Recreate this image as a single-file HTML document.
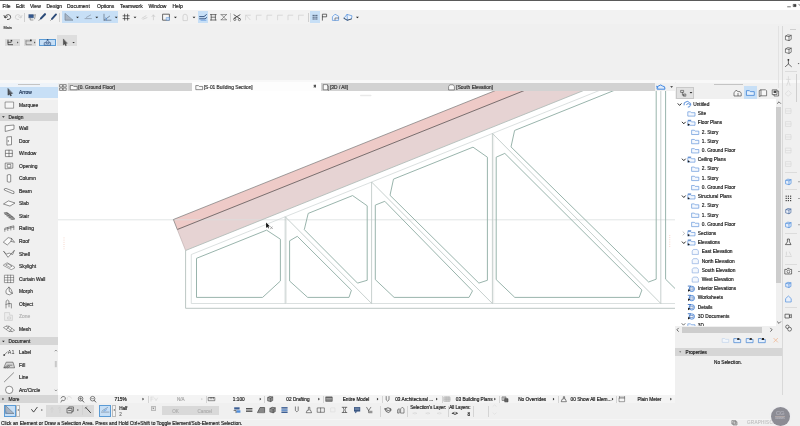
<!DOCTYPE html>
<html><head><meta charset="utf-8"><title>Archicad</title>
<style>
html,body{margin:0;padding:0}
body{width:800px;height:426px;overflow:hidden;background:#f0f0f0;font-family:"Liberation Sans",sans-serif;position:relative}
.t{position:absolute;white-space:nowrap;-webkit-text-stroke:0.18px currentColor;will-change:opacity;opacity:.999}
.r{position:absolute}
svg{position:absolute;left:0;top:0;overflow:visible}
</style></head><body>

<div class="r" style="left:0.00px;top:0.00px;width:800.00px;height:1.20px;background:#5a5a5a;"></div>
<div class="r" style="left:0.00px;top:1.20px;width:800.00px;height:8.60px;background:#ffffff;"></div>
<div class="t" style="left:2.50px;top:2.70px;font-size:5px;line-height:6px;color:#222;">File</div>
<div class="t" style="left:16.00px;top:2.70px;font-size:5px;line-height:6px;color:#222;">Edit</div>
<div class="t" style="left:30.00px;top:2.70px;font-size:5px;line-height:6px;color:#222;">View</div>
<div class="t" style="left:46.50px;top:2.70px;font-size:5px;line-height:6px;color:#222;">Design</div>
<div class="t" style="left:67.00px;top:2.70px;font-size:5px;line-height:6px;color:#222;">Document</div>
<div class="t" style="left:97.00px;top:2.70px;font-size:5px;line-height:6px;color:#222;">Options</div>
<div class="t" style="left:120.00px;top:2.70px;font-size:5px;line-height:6px;color:#222;">Teamwork</div>
<div class="t" style="left:148.50px;top:2.70px;font-size:5px;line-height:6px;color:#222;">Window</div>
<div class="t" style="left:172.50px;top:2.70px;font-size:5px;line-height:6px;color:#222;">Help</div>
<div class="r" style="left:58px;top:91px;width:617px;height:304px;background:#fff;overflow:hidden"><svg width="617" height="304" viewBox="58 91 617 304" style="left:0;top:0">
<polygon points="173.4,219.5 700,8.59669999999997 700,20.158649999999966 177.3,229.5" fill="#eecac7"/>
<polygon points="177.3,229.5 700,20.158649999999966 700,43.71119999999999 185.6,250.5" fill="#e6d3d3"/>
<line x1="58" y1="219.8" x2="675" y2="219.8" stroke="#d9dede" stroke-width="0.8"/>
<polyline points="177.3,229.5 173.4,219.5 700,8.59669999999997" fill="none" stroke="#777" stroke-width="0.7"/>
<line x1="177.3" y1="229.5" x2="700" y2="20.158649999999966" stroke="#5a5050" stroke-width="0.8"/>
<line x1="177.3" y1="229.5" x2="185.6" y2="250.5" stroke="#b9aaaa" stroke-width="0.6"/>
<polyline points="700,43.71119999999999 185.6,250.5 185.6,308.3 675,308.3" fill="none" stroke="#a9b8b4" stroke-width="0.8"/>
<polyline points="700,50.01119999999999 191.3,254.5086 191.3,303.5 675,303.5" fill="none" stroke="#ccd3d3" stroke-width="0.7"/>
<line x1="285.2" y1="216.76080000000002" x2="285.2" y2="303.5" stroke="#b9c4c1" stroke-width="0.8"/>
<line x1="286.5" y1="216.2382" x2="286.5" y2="303.5" stroke="#dde2e1" stroke-width="0.6"/>
<line x1="371.6" y1="182.028" x2="371.6" y2="303.5" stroke="#b9c4c1" stroke-width="0.8"/>
<line x1="492.4" y1="133.46640000000002" x2="492.4" y2="303.5" stroke="#b9c4c1" stroke-width="0.8"/>
<line x1="493.7" y1="132.94379999999998" x2="493.7" y2="303.5" stroke="#dde2e1" stroke-width="0.6"/>
<line x1="660.8" y1="65.76960000000001" x2="660.8" y2="303.5" stroke="#b9c4c1" stroke-width="0.8"/>
<polygon points="196.50,258.32 266.60,230.14 280.40,239.20 280.40,281.00 262.60,297.40 196.50,297.40" fill="none" stroke="#94b0a8" stroke-width="0.95" stroke-linejoin="round"/>
<line x1="285.2" y1="216.76080000000002" x2="371.6" y2="303.5" stroke="#b9c4c1" stroke-width="0.8"/>
<polygon points="289.60,240.80 297.30,236.30 351.40,290.20 349.00,297.40 307.70,297.40 289.60,281.00" fill="none" stroke="#94b0a8" stroke-width="0.95" stroke-linejoin="round"/>
<polygon points="308.20,213.41 352.60,195.57 367.20,205.80 367.20,280.30 357.50,283.10 304.30,229.60" fill="none" stroke="#94b0a8" stroke-width="0.95" stroke-linejoin="round"/>
<line x1="371.6" y1="182.028" x2="492.4" y2="303.5" stroke="#b9c4c1" stroke-width="0.8"/>
<polygon points="375.30,205.10 384.80,201.30 472.50,290.90 469.00,297.40 394.10,297.40 375.30,279.60" fill="none" stroke="#94b0a8" stroke-width="0.95" stroke-linejoin="round"/>
<polygon points="393.50,179.12 473.00,147.17 487.40,157.20 487.40,280.30 478.90,283.10 390.00,195.30" fill="none" stroke="#94b0a8" stroke-width="0.95" stroke-linejoin="round"/>
<line x1="492.4" y1="133.46640000000002" x2="660.8" y2="303.5" stroke="#b9c4c1" stroke-width="0.8"/>
<polygon points="496.20,157.20 504.80,153.40 641.90,290.00 639.20,297.40 514.80,297.40 496.20,279.60" fill="none" stroke="#94b0a8" stroke-width="0.95" stroke-linejoin="round"/>
<polygon points="514.60,130.44 650.00,76.01 656.20,70.00 656.20,279.20 648.60,282.00 511.00,146.90" fill="none" stroke="#94b0a8" stroke-width="0.95" stroke-linejoin="round"/>
<line x1="660.8" y1="65.76960000000001" x2="960.8" y2="365.7696" stroke="#b9c4c1" stroke-width="0.8"/>
<polygon points="665.60,80.00 665.60,279.20 684.00,297.40 700.00,297.40 700.00,80.00" fill="none" stroke="#94b0a8" stroke-width="0.95" stroke-linejoin="round"/>
<path d="M266.1 222.5 L266.1 227.9 L267.4 226.8 L268.2 228.4 L268.9 228 L268.2 226.5 L269.8 226.2 Z" fill="#111"/>
<path d="M270 226.2 l2.8 2.8 m-2.6 0.2 l2.2 -2.6" stroke="#8a8a8a" stroke-width="0.7" fill="none"/>
</svg></div>
<div class="r" style="left:0.00px;top:80.00px;width:800.00px;height:2.50px;background:#f8f8f8;"></div>
<div class="r" style="left:0.00px;top:82.50px;width:57.60px;height:4.00px;background:#eef3f9;"></div>
<div class="r" style="left:0.00px;top:97.80px;width:57.60px;height:2.00px;background:#f5f5f5;"></div>
<div class="r" style="left:0.00px;top:9.80px;width:800.00px;height:14.20px;background:#f2f2f2;"></div>
<div class="r" style="left:674.50px;top:82.00px;width:1.50px;height:313.00px;background:#f0f0f0;"></div>
<div class="r" style="left:655.00px;top:82.60px;width:20.00px;height:8.80px;background:#f0f0f0;"></div>
<div class="r" style="left:58.00px;top:82.60px;width:597.00px;height:8.80px;background:#d2d2d2;"></div>
<div class="r" style="left:58.00px;top:82.60px;width:10.00px;height:8.80px;background:#ececec;"></div>
<div class="r" style="left:192.00px;top:82.40px;width:128.50px;height:9.00px;background:#fdfdfd;"></div>
<div class="t" style="left:78.30px;top:85.08px;font-size:4.85px;line-height:5.85px;color:#333;">[0. Ground Floor]</div>
<div class="t" style="left:203.70px;top:85.08px;font-size:4.85px;line-height:5.85px;color:#333;">[S-01 Building Section]</div>
<div class="t" style="left:330.00px;top:85.08px;font-size:4.85px;line-height:5.85px;color:#333;">[3D / All]</div>
<div class="t" style="left:456.30px;top:85.08px;font-size:4.85px;line-height:5.85px;color:#333;">[South Elevation]</div>
<div class="t" style="left:313.60px;top:83.70px;font-size:4.6px;line-height:5.6px;color:#111;font-weight:bold">×</div>
<div class="r" style="left:0.00px;top:86.50px;width:57.60px;height:11.30px;background:#c7dff6;"></div>
<div class="r" style="left:0.00px;top:112.80px;width:57.60px;height:7.90px;background:#d6d6d6;"></div>
<div class="r" style="left:0.00px;top:337.30px;width:57.60px;height:7.90px;background:#d6d6d6;"></div>
<div class="r" style="left:0.00px;top:394.80px;width:57.60px;height:8.20px;background:#d6d6d6;"></div>
<div class="r" style="left:18.00px;top:84.00px;width:22.00px;height:0.60px;background:#c4c4c4;"></div>
<div class="t" style="left:19.00px;top:89.95px;font-size:4.9px;line-height:5.9px;color:#243a5a;">Arrow</div>
<div class="t" style="left:19.00px;top:102.75px;font-size:4.9px;line-height:5.9px;color:#2a2a2a;">Marquee</div>
<div class="t" style="left:19.00px;top:126.15px;font-size:4.9px;line-height:5.9px;color:#2a2a2a;">Wall</div>
<div class="t" style="left:19.00px;top:138.69px;font-size:4.9px;line-height:5.9px;color:#2a2a2a;">Door</div>
<div class="t" style="left:19.00px;top:151.23px;font-size:4.9px;line-height:5.9px;color:#2a2a2a;">Window</div>
<div class="t" style="left:19.00px;top:163.77px;font-size:4.9px;line-height:5.9px;color:#2a2a2a;">Opening</div>
<div class="t" style="left:19.00px;top:176.31px;font-size:4.9px;line-height:5.9px;color:#2a2a2a;">Column</div>
<div class="t" style="left:19.00px;top:188.85px;font-size:4.9px;line-height:5.9px;color:#2a2a2a;">Beam</div>
<div class="t" style="left:19.00px;top:201.39px;font-size:4.9px;line-height:5.9px;color:#2a2a2a;">Slab</div>
<div class="t" style="left:19.00px;top:213.93px;font-size:4.9px;line-height:5.9px;color:#2a2a2a;">Stair</div>
<div class="t" style="left:19.00px;top:226.47px;font-size:4.9px;line-height:5.9px;color:#2a2a2a;">Railing</div>
<div class="t" style="left:19.00px;top:239.01px;font-size:4.9px;line-height:5.9px;color:#2a2a2a;">Roof</div>
<div class="t" style="left:19.00px;top:251.55px;font-size:4.9px;line-height:5.9px;color:#2a2a2a;">Shell</div>
<div class="t" style="left:19.00px;top:264.09px;font-size:4.9px;line-height:5.9px;color:#2a2a2a;">Skylight</div>
<div class="t" style="left:19.00px;top:276.63px;font-size:4.9px;line-height:5.9px;color:#2a2a2a;">Curtain Wall</div>
<div class="t" style="left:19.00px;top:289.17px;font-size:4.9px;line-height:5.9px;color:#2a2a2a;">Morph</div>
<div class="t" style="left:19.00px;top:301.71px;font-size:4.9px;line-height:5.9px;color:#2a2a2a;">Object</div>
<div class="t" style="left:19.00px;top:314.25px;font-size:4.9px;line-height:5.9px;color:#b5b5b5;">Zone</div>
<div class="t" style="left:19.00px;top:326.79px;font-size:4.9px;line-height:5.9px;color:#2a2a2a;">Mesh</div>
<div class="t" style="left:19.00px;top:350.35px;font-size:4.9px;line-height:5.9px;color:#2a2a2a;">Label</div>
<div class="t" style="left:19.00px;top:362.75px;font-size:4.9px;line-height:5.9px;color:#2a2a2a;">Fill</div>
<div class="t" style="left:19.00px;top:375.15px;font-size:4.9px;line-height:5.9px;color:#2a2a2a;">Line</div>
<div class="t" style="left:19.00px;top:387.55px;font-size:4.9px;line-height:5.9px;color:#2a2a2a;">Arc/Circle</div>
<div class="t" style="left:8.50px;top:114.80px;font-size:4.8px;line-height:5.8px;color:#2a2a2a;">Design</div>
<div class="t" style="left:8.50px;top:339.30px;font-size:4.8px;line-height:5.8px;color:#2a2a2a;">Document</div>
<div class="t" style="left:8.50px;top:396.90px;font-size:4.8px;line-height:5.8px;color:#2a2a2a;">More</div>
<div class="r" style="left:675.00px;top:99.40px;width:100.50px;height:226.80px;background:#ffffff;"></div>
<div class="r" style="left:775.50px;top:99.40px;width:6.50px;height:226.80px;background:#f0f0f0;"></div>
<div class="r" style="left:776.30px;top:107.00px;width:5.00px;height:176.00px;background:#cdcdcd;"></div>
<div class="r" style="left:713.50px;top:84.00px;width:29.00px;height:0.60px;background:#c4c4c4;"></div>
<div class="r" style="left:676.20px;top:87.00px;width:18.00px;height:11.50px;background:#e1e1e1;box-sizing:border-box;border:0.5px solid #c8c8c8"></div>
<div class="r" style="left:744.30px;top:86.20px;width:12.50px;height:12.80px;background:#c7dff6;"></div>
<div class="t" style="left:693.20px;top:102.00px;font-size:4.8px;line-height:5.8px;color:#222;">Untitled</div>
<div class="t" style="left:697.80px;top:111.21px;font-size:4.8px;line-height:5.8px;color:#222;">Site</div>
<div class="t" style="left:697.80px;top:120.42px;font-size:4.8px;line-height:5.8px;color:#222;">Floor Plans</div>
<div class="t" style="left:701.80px;top:129.63px;font-size:4.8px;line-height:5.8px;color:#222;">2. Story</div>
<div class="t" style="left:701.80px;top:138.84px;font-size:4.8px;line-height:5.8px;color:#222;">1. Story</div>
<div class="t" style="left:701.80px;top:148.05px;font-size:4.8px;line-height:5.8px;color:#222;">0. Ground Floor</div>
<div class="t" style="left:697.80px;top:157.26px;font-size:4.8px;line-height:5.8px;color:#222;">Ceiling Plans</div>
<div class="t" style="left:701.80px;top:166.47px;font-size:4.8px;line-height:5.8px;color:#222;">2. Story</div>
<div class="t" style="left:701.80px;top:175.68px;font-size:4.8px;line-height:5.8px;color:#222;">1. Story</div>
<div class="t" style="left:701.80px;top:184.89px;font-size:4.8px;line-height:5.8px;color:#222;">0. Ground Floor</div>
<div class="t" style="left:697.80px;top:194.10px;font-size:4.8px;line-height:5.8px;color:#222;">Structural Plans</div>
<div class="t" style="left:701.80px;top:203.31px;font-size:4.8px;line-height:5.8px;color:#222;">2. Story</div>
<div class="t" style="left:701.80px;top:212.52px;font-size:4.8px;line-height:5.8px;color:#222;">1. Story</div>
<div class="t" style="left:701.80px;top:221.73px;font-size:4.8px;line-height:5.8px;color:#222;">0. Ground Floor</div>
<div class="t" style="left:697.80px;top:230.94px;font-size:4.8px;line-height:5.8px;color:#222;">Sections</div>
<div class="t" style="left:697.80px;top:240.15px;font-size:4.8px;line-height:5.8px;color:#222;">Elevations</div>
<div class="t" style="left:701.80px;top:249.36px;font-size:4.8px;line-height:5.8px;color:#222;">East Elevation</div>
<div class="t" style="left:701.80px;top:258.57px;font-size:4.8px;line-height:5.8px;color:#222;">North Elevation</div>
<div class="t" style="left:701.80px;top:267.78px;font-size:4.8px;line-height:5.8px;color:#222;">South Elevation</div>
<div class="t" style="left:701.80px;top:276.99px;font-size:4.8px;line-height:5.8px;color:#222;">West Elevation</div>
<div class="t" style="left:697.80px;top:286.20px;font-size:4.8px;line-height:5.8px;color:#222;">Interior Elevations</div>
<div class="t" style="left:697.80px;top:295.41px;font-size:4.8px;line-height:5.8px;color:#222;">Worksheets</div>
<div class="t" style="left:697.80px;top:304.62px;font-size:4.8px;line-height:5.8px;color:#222;">Details</div>
<div class="t" style="left:697.80px;top:313.83px;font-size:4.8px;line-height:5.8px;color:#222;">3D Documents</div>
<div class="r" style="left:675.00px;top:326.20px;width:107.00px;height:7.00px;background:#f0f0f0;"></div>
<div class="r" style="left:682.20px;top:327.00px;width:80.00px;height:5.80px;background:#cdcdcd;"></div>
<div class="r" style="left:675.00px;top:347.60px;width:106.50px;height:8.30px;background:#d6d6d6;"></div>
<div class="t" style="left:685.50px;top:349.85px;font-size:4.7px;line-height:5.7px;color:#222;">Properties</div>
<div class="t" style="left:678.00px;width:100px;text-align:center;top:359.65px;font-size:4.7px;line-height:5.7px;color:#222;">No Selection.</div>
<div class="r" style="left:58.00px;top:394.60px;width:617.00px;height:8.60px;background:#f4f4f4;"></div>
<div class="t" style="left:114.50px;top:396.92px;font-size:4.75px;line-height:5.75px;color:#222;">715%</div>
<div class="t" style="left:232.80px;top:396.92px;font-size:4.75px;line-height:5.75px;color:#222;">1:100</div>
<div class="t" style="left:286.30px;top:396.92px;font-size:4.75px;line-height:5.75px;color:#222;">02 Drafting</div>
<div class="t" style="left:342.70px;top:396.92px;font-size:4.75px;line-height:5.75px;color:#222;">Entire Model</div>
<div class="t" style="left:395.20px;top:396.92px;font-size:4.75px;line-height:5.75px;color:#222;">03 Architectural ...</div>
<div class="t" style="left:455.80px;top:396.92px;font-size:4.75px;line-height:5.75px;color:#222;">03 Building Plans</div>
<div class="t" style="left:518.20px;top:396.92px;font-size:4.75px;line-height:5.75px;color:#222;">No Overrides</div>
<div class="t" style="left:570.60px;top:396.92px;font-size:4.75px;line-height:5.75px;color:#222;">00 Show All Elem...</div>
<div class="t" style="left:637.40px;top:396.92px;font-size:4.75px;line-height:5.75px;color:#222;">Plain Meter</div>
<div class="t" style="left:177.00px;top:397.00px;font-size:4.6px;line-height:5.6px;color:#aaa;">N/A</div>
<div class="r" style="left:3.60px;top:405.00px;width:12.40px;height:12.20px;background:#c7dff6;box-sizing:border-box;border:0.6px solid #5b9bd5"></div>
<div class="r" style="left:16.40px;top:405.00px;width:4.00px;height:12.20px;background:#f4f4f4;box-sizing:border-box;border:0.4px solid #bbb"></div>
<div class="r" style="left:45.60px;top:405.00px;width:48.40px;height:12.20px;background:#dadada;"></div>
<div class="r" style="left:99.00px;top:405.00px;width:12.40px;height:12.20px;background:#c7dff6;box-sizing:border-box;border:0.6px solid #5b9bd5"></div>
<div class="r" style="left:112.00px;top:405.00px;width:4.40px;height:12.20px;background:#f4f4f4;box-sizing:border-box;border:0.4px solid #bbb"></div>
<div class="t" style="left:119.20px;top:405.90px;font-size:4.6px;line-height:5.6px;color:#222;">Half</div>
<div class="t" style="left:119.20px;top:412.10px;font-size:4.6px;line-height:5.6px;color:#777;">2</div>
<div class="r" style="left:150.60px;top:405.60px;width:5.00px;height:5.00px;background:#e4e4e4;box-sizing:border-box;border:0.4px solid #bbb"></div>
<div class="r" style="left:161.60px;top:406.00px;width:28.00px;height:9.20px;background:#d9d9d9;"></div>
<div class="r" style="left:190.40px;top:406.00px;width:28.60px;height:9.20px;background:#d9d9d9;"></div>
<div class="t" style="left:125.60px;width:100px;text-align:center;top:408.70px;font-size:4.6px;line-height:5.6px;color:#b0b0b0;">OK</div>
<div class="t" style="left:154.70px;width:100px;text-align:center;top:408.70px;font-size:4.6px;line-height:5.6px;color:#b0b0b0;">Cancel</div>
<div class="t" style="left:410.20px;top:405.40px;font-size:4.6px;line-height:5.6px;color:#222;">Selection's Layer:</div>
<div class="t" style="left:449.20px;top:405.40px;font-size:4.6px;line-height:5.6px;color:#222;">All Layers:</div>
<div class="t" style="left:467.40px;top:412.10px;font-size:4.6px;line-height:5.6px;color:#222;">8</div>
<div class="t" style="left:1.00px;top:420.56px;font-size:4.87px;line-height:5.87px;color:#222;">Click an Element or Draw a Selection Area. Press and Hold Ctrl+Shift to Toggle Element/Sub-Element Selection.</div>
<div class="t" style="left:747.00px;top:420.30px;font-size:4.6px;line-height:5.6px;color:#c6c6c6;letter-spacing:0.25px">GRAPHISOFT</div>
<div class="r" style="left:770.5px;top:406.5px;width:19px;height:19px;border-radius:50%;background:#8c8c94;box-shadow:0 0 1.2px 0.6px rgba(235,235,240,.9)"></div>
<div class="t" style="left:730.00px;width:100px;text-align:center;top:408.90px;font-size:6.2px;line-height:7.2px;color:#a9a9b2;font-weight:bold;letter-spacing:-0.3px">CG</div>
<div class="t" style="left:730.00px;width:100px;text-align:center;top:416.70px;font-size:2.6px;line-height:3.6px;color:#b4b4bc;">courses</div>
<div class="r" style="left:775.00px;top:416.20px;width:10.00px;height:0.40px;background:#b0a6a6;"></div>
<div class="t" style="left:3.60px;top:25.85px;font-size:3.9px;line-height:4.9px;color:#444;">Main</div>
<svg width="800" height="426" viewBox="0 0 800 426">
<path d="M8 88.9 L8 95.2 L9.5 93.9 L10.6 96 L11.4 95.6 L10.4 93.6 L12.2 93.4 Z" stroke="#222" stroke-width="0.55" fill="#5a5f68" stroke-linejoin="round" stroke-linecap="round" />
<path d="M5.5 102 H13.6 V108.2 H5.5 Z" stroke="#555" stroke-width="0.55" fill="#f6f6f6" stroke-linejoin="round" stroke-linecap="round" />
<path d="M2.05 116.325 L4.75 116.325 L3.4 117.81 Z" fill="#222"/>
<path d="M2.05 340.825 L4.75 340.825 L3.4 342.31 Z" fill="#222"/>
<path d="M2.5250000000000004 397.65 L4.01 399.0 L2.5250000000000004 400.35 Z" fill="#222"/>
<path d="M5.6 125.80000000000001 L14 125.0 L14 129.20000000000002 L5.6 131.4 Z" stroke="#484848" stroke-width="0.6" fill="#fafafa" stroke-linejoin="round" stroke-linecap="round" />
<path d="M7.3 136.9 L11.5 136.6 L11.5 144.70000000000002 L7.3 145.1 Z M8.3 140.4 V141.70000000000002" stroke="#484848" stroke-width="0.6" fill="#fafafa" stroke-linejoin="round" stroke-linecap="round" />
<path d="M5.8 150.20000000000002 H12.3 V156.6 H5.8 Z M9 150.20000000000002 V156.6 M5.8 153.4 H12.3" stroke="#484848" stroke-width="0.6" fill="#fafafa" stroke-linejoin="round" stroke-linecap="round" />
<path d="M5.6 163.1 H12.8 V168.1 L5.6 168.9 Z M7.6 164.4 H10.8 V167.3 H7.6 Z" stroke="#484848" stroke-width="0.6" fill="#fafafa" stroke-linejoin="round" stroke-linecap="round" />
<path d="M7.6 174.9 Q9.1 174.1 10.7 174.9 V181.8 Q9.1 182.7 7.6 181.8 Z" stroke="#484848" stroke-width="0.6" fill="#fafafa" stroke-linejoin="round" stroke-linecap="round" />
<path d="M4.7 188.8 L6 188.4 L14 191.6 L14 193.4 L12.8 193.6 L4.7 190.2 Z" stroke="#484848" stroke-width="0.6" fill="#fafafa" stroke-linejoin="round" stroke-linecap="round" />
<path d="M3.8 203.8 L8.4 200.9 L15 203.0 L10.3 205.9 Z" stroke="#484848" stroke-width="0.6" fill="#fafafa" stroke-linejoin="round" stroke-linecap="round" />
<path d="M4.3 212.8 L7 212.4 L14.4 218 L14.4 219.4 L11.4 219.4 Z M5.6 213.4 L12.6 219 M6.8 212.8 L13.6 218.4 M5 214.5 L8 213.5 M7 216 L10 215 M9 217.6 L12 216.6" stroke="#484848" stroke-width="0.5" fill="#bbb" stroke-linejoin="round" stroke-linecap="round" />
<path d="M4.8 231.4 V228.2 L13.8 225.79999999999998 V229.6 M4.8 229.4 L13.8 227.1 M7.8 227.4 V230.6 M10.8 226.6 V230.0" stroke="#484848" stroke-width="0.55" fill="none" stroke-linejoin="round" stroke-linecap="round" />
<path d="M3.6 241.9 L8.2 237.6 L11.6 238.5 L14.6 242.29999999999998 L11 241.29999999999998 L7.6 244.7 Z M11.6 238.5 L11 241.29999999999998" stroke="#484848" stroke-width="0.6" fill="#fafafa" stroke-linejoin="round" stroke-linecap="round" />
<path d="M3.8 251.5 L8 257.3 L14.4 250.29999999999998 L12.6 254.5 Q9 251.89999999999998 6.6 253.89999999999998 Z" stroke="#484848" stroke-width="0.6" fill="#fafafa" stroke-linejoin="round" stroke-linecap="round" />
<path d="M4 264.59999999999997 L7.2 262.8 L14.4 266.8 L14.4 268.2 L11.2 269.59999999999997 L4 265.8 Z M6 264.8 L8 263.8 L12 266.2 L10.2 267.2 Z" stroke="#484848" stroke-width="0.5" fill="#fafafa" stroke-linejoin="round" stroke-linecap="round" />
<path d="M4.8 275.2 H13.6 V282.6 H4.8 Z M7.7 275.2 V282.6 M10.6 275.2 V282.6 M4.8 277.6 H13.6 M4.8 280.1 H13.6" stroke="#484848" stroke-width="0.5" fill="#fafafa" stroke-linejoin="round" stroke-linecap="round" />
<path d="M8.8 287.3 Q4.6 290.3 6.4 293.7 Q9.4 296.1 12.4 293.3 L9.6 291.7 Z M8.8 287.3 Q11.6 288.3 12.4 293.3" stroke="#484848" stroke-width="0.6" fill="#fafafa" stroke-linejoin="round" stroke-linecap="round" />
<path d="M6 308.0 V303.40000000000003 Q5.6 300.0 7.6 300.0 Q9.4 300.0 9 303.6 H11.4 V308.0 M9 303.6 V306.8 M6 304.40000000000003 L9 303.6" stroke="#484848" stroke-width="0.55" fill="none" stroke-linejoin="round" stroke-linecap="round" />
<path d="M5 312.59999999999997 H9.6 V315.2 H12.4 V320.4 H5 Z M8 317.0 H10.6 V319.0 H8 Z" stroke="#c4c4c4" stroke-width="0.6" fill="#ececec" stroke-linejoin="round" stroke-linecap="round" />
<path d="M3.8 327.29999999999995 Q7 324.9 9 326.29999999999995 L14.6 330.29999999999995 Q12.4 332.29999999999995 9.4 331.5 Z M6.4 326.29999999999995 L12 331.5 M9 326.29999999999995 Q8.6 328.7 6.4 329.29999999999995 M11.8 328.29999999999995 Q10.8 330.5 9.4 331.5" stroke="#484848" stroke-width="0.5" fill="#fafafa" stroke-linejoin="round" stroke-linecap="round" />
<path d="M4 355.20000000000005 L7.4 351.8" stroke="#484848" stroke-width="0.6" fill="none" stroke-linejoin="round" stroke-linecap="round" />
<circle cx="4.2" cy="355.0" r="0.9" fill="#484848"/>
<text x="7.8" y="353.8" font-size="5.4" fill="#333" font-family="Liberation Sans, sans-serif">A1</text>
<path d="M6.6 362.2 H13 L14.6 367.8 H4.2 Z M4.2 367.8 L7.6 365.2 H12 M5.6 367.8 L8.4 365.9 M7.6 367.8 L9.6 366.4" stroke="#484848" stroke-width="0.6" fill="#d8d8d8" stroke-linejoin="round" stroke-linecap="round" />
<path d="M4.4 381.79999999999995 L13.6 372.79999999999995" stroke="#484848" stroke-width="0.6" fill="none" stroke-linejoin="round" stroke-linecap="round" />
<circle cx="9.2" cy="389.9" r="3.7" fill="#fafafa" stroke="#484848" stroke-width="0.6"/>
<rect x="54.8" y="361" width="2" height="6.2" fill="#c9c9c9"/>
<path d="M55 351 L55.9 350 L56.8 351" stroke="#484848" stroke-width="0.5" fill="none" stroke-linejoin="round" stroke-linecap="round" />
<path d="M55 390 L55.9 391 L56.8 390" stroke="#484848" stroke-width="0.5" fill="none" stroke-linejoin="round" stroke-linecap="round" />
<rect x="63.6" y="237.5" width="0.8" height="0.8" fill="#f0c0b0"/><rect x="669.4" y="235.0" width="0.8" height="0.8" fill="#f0c0b0"/>
<rect x="63.6" y="239.7" width="0.8" height="0.8" fill="#f0c0b0"/><rect x="669.4" y="237.2" width="0.8" height="0.8" fill="#f0c0b0"/>
<rect x="63.6" y="241.9" width="0.8" height="0.8" fill="#f0c0b0"/><rect x="669.4" y="239.4" width="0.8" height="0.8" fill="#f0c0b0"/>
<rect x="63.6" y="244.1" width="0.8" height="0.8" fill="#f0c0b0"/><rect x="669.4" y="241.6" width="0.8" height="0.8" fill="#f0c0b0"/>
<rect x="63.6" y="246.3" width="0.8" height="0.8" fill="#f0c0b0"/><rect x="669.4" y="243.8" width="0.8" height="0.8" fill="#f0c0b0"/>
<rect x="63.6" y="248.5" width="0.8" height="0.8" fill="#f0c0b0"/><rect x="669.4" y="246.0" width="0.8" height="0.8" fill="#f0c0b0"/>
</svg>
<div class="r" style="left:61.50px;top:10.80px;width:56.80px;height:12.00px;background:#c7dff6;"></div>
<div class="r" style="left:198.00px;top:10.80px;width:10.20px;height:12.00px;background:#c7dff6;"></div>
<div class="r" style="left:310.00px;top:10.80px;width:10.40px;height:12.00px;background:#c7dff6;"></div>
<div class="r" style="left:5.20px;top:38.60px;width:15.20px;height:7.80px;background:#dadada;"></div>
<div class="r" style="left:24.00px;top:38.60px;width:12.40px;height:7.80px;background:#dadada;"></div>
<div class="r" style="left:39.30px;top:38.60px;width:16.50px;height:7.80px;background:#c7dff6;box-sizing:border-box;border:0.6px solid #5b9bd5"></div>
<div class="r" style="left:57.00px;top:35.00px;width:19.60px;height:11.40px;background:#dedede;"></div>
<div class="r" style="left:24.20px;top:12.50px;width:0.50px;height:9.60px;background:#cfcfcf;"></div>
<div class="r" style="left:59.30px;top:12.50px;width:0.50px;height:9.60px;background:#cfcfcf;"></div>
<div class="r" style="left:230.00px;top:12.50px;width:0.50px;height:9.60px;background:#cfcfcf;"></div>
<div class="r" style="left:307.50px;top:12.50px;width:0.50px;height:9.60px;background:#cfcfcf;"></div>
<svg width="800" height="426" viewBox="0 0 800 426">
<path d="M5 17.599999999999998 Q5.4 14.399999999999999 8.4 14.6 Q11.2 15.0 10.6 17.8 Q10 19.8 7.4 19.599999999999998 M4 15.399999999999999 L5 18.0 L7.4 16.8" stroke="#333" stroke-width="0.8" fill="none" stroke-linejoin="round" stroke-linecap="round" />
<path d="M21 17.599999999999998 Q20.6 14.399999999999999 17.6 14.6 Q14.8 15.0 15.4 17.8 Q16 19.8 18.6 19.599999999999998 M22 15.399999999999999 L21 18.0 L18.6 16.8" stroke="#cfcfcf" stroke-width="0.8" fill="none" stroke-linejoin="round" stroke-linecap="round" />
<path d="M29 14.6 H33.4 V17.8 H29 Z" stroke="#2b4a78" stroke-width="0.5" fill="#35598f" stroke-linejoin="round" stroke-linecap="round" />
<path d="M30.2 17.8 V20.0 H33 M33.6 15.399999999999999 L35.4 14.6 L34.6 18.8" stroke="#666" stroke-width="0.6" fill="none" stroke-linejoin="round" stroke-linecap="round" />
<path d="M39 20.4 L41.2 18.2 " stroke="#555" stroke-width="0.7" fill="none" stroke-linejoin="round" stroke-linecap="round" />
<path d="M41 18.4 L45 14.2" stroke="#2b4a78" stroke-width="2.1" fill="none" stroke-linejoin="round" stroke-linecap="round" />
<path d="M50.6 20.4 L52 19.0" stroke="#555" stroke-width="0.6" fill="none" stroke-linejoin="round" stroke-linecap="round" />
<path d="M52 18.8 L56 14.399999999999999" stroke="#2b4a78" stroke-width="1.9" fill="none" stroke-linejoin="round" stroke-linecap="round" />
<path d="M65 13.799999999999999 L65 20.2 L72.6 20.2 Z" stroke="#6b7a8c" stroke-width="0.6" fill="#a9b4c2" stroke-linejoin="round" stroke-linecap="round" />
<path d="M76.05 16.674999999999997 L78.95 16.674999999999997 L77.5 18.27 Z" fill="#222"/>
<path d="M85 18.599999999999998 H91.4 M86.4 17.4 L90.6 15.0" stroke="#7a8796" stroke-width="0.6" fill="none" stroke-linejoin="round" stroke-linecap="round" />
<path d="M95.35 16.674999999999997 L98.25 16.674999999999997 L96.8 18.27 Z" fill="#222"/>
<path d="M104 14.2 V20.2 H111 M104 20.2 L109.6 16.2" stroke="#5b6a7c" stroke-width="0.7" fill="none" stroke-linejoin="round" stroke-linecap="round" />
<path d="M106.6 20.2 A3 3 0 0 0 105.8 17.8" stroke="#4f8edc" stroke-width="0.7" fill="none" stroke-linejoin="round" stroke-linecap="round" />
<path d="M114.75 16.674999999999997 L117.65 16.674999999999997 L116.2 18.27 Z" fill="#222"/>
<path d="M124.6 14.2 V20.2 M127.6 14.2 V20.2 M123 15.799999999999999 H129.2 M123 18.599999999999998 H129.2" stroke="#333" stroke-width="0.7" fill="none" stroke-linejoin="round" stroke-linecap="round" />
<path d="M133.55 16.674999999999997 L136.45 16.674999999999997 L135 18.27 Z" fill="#222"/>
<path d="M142 18.2 L146 15.799999999999999 M143 19.2 L147 17.599999999999998" stroke="#c9c9c9" stroke-width="0.7" fill="none" stroke-linejoin="round" stroke-linecap="round" />
<path d="M153.4 19.8 V15.2 M152 16.599999999999998 L153.4 14.799999999999999 L154.8 16.599999999999998" stroke="#c9c9c9" stroke-width="0.7" fill="none" stroke-linejoin="round" stroke-linecap="round" />
<path d="M163 14.2 H169.4 V20.2 H163 Z" stroke="#444" stroke-width="0.8" fill="#f6f6f6" stroke-linejoin="round" stroke-linecap="round" />
<path d="M166.6 17.599999999999998 H169.4 V20.2 H166.6 Z" stroke="#4f8edc" stroke-width="0.5" fill="#cfe0f5" stroke-linejoin="round" stroke-linecap="round" />
<path d="M173.95000000000002 16.674999999999997 L176.85 16.674999999999997 L175.4 18.27 Z" fill="#222"/>
<path d="M183 20.2 V16.2 Q183 14.2 185 14.2 Q187.4 14.2 187.4 16.8 V20.2 Z" stroke="#c9c9c9" stroke-width="0.7" fill="none" stroke-linejoin="round" stroke-linecap="round" />
<path d="M192.55 16.674999999999997 L195.45 16.674999999999997 L194 18.27 Z" fill="#222"/>
<path d="M199.6 16.599999999999998 H204 L206.4 14.6 M199.6 18.8 H205 L206.6 17.599999999999998" stroke="#2b4a78" stroke-width="0.9" fill="none" stroke-linejoin="round" stroke-linecap="round" />
<path d="M201 20.2 H206" stroke="#4f8edc" stroke-width="0.7" fill="none" stroke-linejoin="round" stroke-linecap="round" />
<path d="M210.4 14.6 H216.2 M211.2 14.6 V20.0 M215.4 14.6 V20.0 M210.4 20.0 H216.2 M211.2 17.2 H215.4" stroke="#444" stroke-width="0.7" fill="none" stroke-linejoin="round" stroke-linecap="round" />
<path d="M221.4 14.799999999999999 L226.2 19.599999999999998 M226.2 14.799999999999999 L221.4 19.599999999999998 M221 14.6 H226.6 M221 19.8 H226.6" stroke="#555" stroke-width="0.6" fill="none" stroke-linejoin="round" stroke-linecap="round" />
<path d="M234 14.799999999999999 L240 18.8 M234 18.4 L240 14.799999999999999" stroke="#333" stroke-width="0.8" fill="none" stroke-linejoin="round" stroke-linecap="round" />
<circle cx="234.8" cy="19.4" r="1.1" fill="none" stroke="#333" stroke-width="0.6"/><circle cx="239.4" cy="19.599999999999998" r="1.1" fill="none" stroke="#333" stroke-width="0.6"/>
<path d="M245.6 19.8 V15.2 H250.4" stroke="#d2d2d2" stroke-width="0.8" fill="none" stroke-linejoin="round" stroke-linecap="round" />
<path d="M256.40000000000003 19.8 V15.2 H261.2" stroke="#d2d2d2" stroke-width="0.8" fill="none" stroke-linejoin="round" stroke-linecap="round" />
<path d="M267.0 19.8 V15.2 H271.79999999999995" stroke="#d2d2d2" stroke-width="0.8" fill="none" stroke-linejoin="round" stroke-linecap="round" />
<path d="M277.6 19.8 V15.2 H282.4" stroke="#d2d2d2" stroke-width="0.8" fill="none" stroke-linejoin="round" stroke-linecap="round" />
<path d="M288.0 19.8 V15.2 H292.79999999999995" stroke="#d2d2d2" stroke-width="0.8" fill="none" stroke-linejoin="round" stroke-linecap="round" />
<path d="M298.6 19.8 V15.2 H303.4" stroke="#d2d2d2" stroke-width="0.8" fill="none" stroke-linejoin="round" stroke-linecap="round" />
<path d="M246 15.2 L250 19.599999999999998" stroke="#d2d2d2" stroke-width="0.8" fill="none" stroke-linejoin="round" stroke-linecap="round" />
<rect x="312.65" y="14.849999999999998" width="1.1" height="1.1" fill="#33415a"/>
<rect x="312.65" y="16.65" width="1.1" height="1.1" fill="#33415a"/>
<rect x="312.65" y="18.45" width="1.1" height="1.1" fill="#33415a"/>
<rect x="314.45" y="14.849999999999998" width="1.1" height="1.1" fill="#33415a"/>
<rect x="314.45" y="16.65" width="1.1" height="1.1" fill="#33415a"/>
<rect x="314.45" y="18.45" width="1.1" height="1.1" fill="#33415a"/>
<rect x="316.25" y="14.849999999999998" width="1.1" height="1.1" fill="#33415a"/>
<rect x="316.25" y="16.65" width="1.1" height="1.1" fill="#33415a"/>
<rect x="316.25" y="18.45" width="1.1" height="1.1" fill="#33415a"/>
<path d="M322.4 20.2 V14.2 H326.6 V16.8 H322.4" stroke="#333" stroke-width="0.7" fill="none" stroke-linejoin="round" stroke-linecap="round" />
<path d="M332.4 20.0 V16.8 L335 14.2 L338.6 16.2 V20.0 Z" stroke="#4f8edc" stroke-width="0.7" fill="#eef4fc" stroke-linejoin="round" stroke-linecap="round" />
<path d="M335 20.0 V18.0 H338.6" stroke="#444" stroke-width="0.6" fill="none" stroke-linejoin="round" stroke-linecap="round" />
<path d="M344 18.2 L347 14.399999999999999 L352 15.799999999999999 L351.4 19.0 L347.4 20.2 Z M347 14.399999999999999 L347.4 20.2" stroke="#4f8edc" stroke-width="0.7" fill="#eef4fc" stroke-linejoin="round" stroke-linecap="round" />
<path d="M344 18.2 L347.4 20.2 L351.4 19.0" stroke="#333" stroke-width="0.7" fill="none" stroke-linejoin="round" stroke-linecap="round" />
<path d="M355.95 16.674999999999997 L358.84999999999997 16.674999999999997 L357.4 18.27 Z" fill="#222"/>
<path d="M8 40.1 V44.7 H12.6 M8 42.3 H11" stroke="#333" stroke-width="0.8" fill="none" stroke-linejoin="round" stroke-linecap="round" />
<rect x="10.6" y="39.9" width="1.6" height="1.6" fill="#333"/>
<path d="M17.3 41.5 L18.400000000000002 42.5 L17.3 43.5 Z" fill="#222"/>
<path d="M26 40.9 H31.4 M26 40.9 V44.7 H31.4" stroke="#666" stroke-width="0.6" fill="none" stroke-linejoin="round" stroke-linecap="round" stroke-dasharray="1 0.7"/>
<rect x="30" y="39.5" width="1.6" height="1.6" fill="#333"/>
<path d="M34.3 41.5 L35.4 42.5 L34.3 43.5 Z" fill="#222"/>
<path d="M44.6 42.7 H50.6 V45.1 H44.6 Z" stroke="#2b4a78" stroke-width="0.6" fill="none" stroke-linejoin="round" stroke-linecap="round" />
<circle cx="47.6" cy="42.3" r="1.6" fill="none" stroke="#2b4a78" stroke-width="0.6"/><rect x="46.9" y="39.1" width="1.4" height="1.4" fill="#2b4a78"/>
<path d="M63.4 39.3 L63.4 44.9 L64.7 43.8 L65.6 45.7 L66.4 45.3 L65.5 43.5 L67 43.3 Z" stroke="#222" stroke-width="0.4" fill="#555" stroke-linejoin="round" stroke-linecap="round" />
<path d="M72.39999999999999 41.9 L74.8 41.9 L73.6 43.22 Z" fill="#222"/>
<path d="M60 84.6 h2.6 v2.4 h-2.6 z" stroke="#555" stroke-width="0.65" fill="#f4f4f4" stroke-linejoin="round" stroke-linecap="round" />
<path d="M60 88.0 h2.6 v2.4 h-2.6 z" stroke="#555" stroke-width="0.65" fill="#f4f4f4" stroke-linejoin="round" stroke-linecap="round" />
<path d="M63.6 84.6 h2.6 v2.4 h-2.6 z" stroke="#555" stroke-width="0.65" fill="#f4f4f4" stroke-linejoin="round" stroke-linecap="round" />
<path d="M63.6 88.0 h2.6 v2.4 h-2.6 z" stroke="#555" stroke-width="0.65" fill="#f4f4f4" stroke-linejoin="round" stroke-linecap="round" />
<path d="M70.6 85.528 h2.352 l0.784 0.882 h3.528 v3.332 h-6.664 z" stroke="#444" stroke-width="0.6" fill="#fafafa" stroke-linejoin="round" stroke-linecap="round" />
<path d="M196.2 85.57000000000001 h2.28 l0.76 0.855 h3.42 v3.23 h-6.46 z" stroke="#444" stroke-width="0.6" fill="#fafafa" stroke-linejoin="round" stroke-linecap="round" />
<path d="M323.6 84.60000000000001 h4 v5.2 h-4 z M327.6 85.60000000000001 l1 0.6 v4.4 l-1 -0.8" stroke="#444" stroke-width="0.55" fill="#fafafa" stroke-linejoin="round" stroke-linecap="round" />
<path d="M448.6 89.60000000000001 v-3 l1.2 -1.8 h3.4 l1.2 1.8 v3 z" stroke="#444" stroke-width="0.55" fill="#fafafa" stroke-linejoin="round" stroke-linecap="round" />
<path d="M657 88.8 q-0.8 -2.8 2 -3 q1.6 -1.8 3.6 0.2 q2.8 0 2.4 2.8 z" stroke="#3f86e0" stroke-width="1.0" fill="#dfeaf9" stroke-linejoin="round" stroke-linecap="round" />
<path d="M656.4 86.2 l1.6 1.6" stroke="#3f86e0" stroke-width="0.9" fill="none" stroke-linejoin="round" stroke-linecap="round" />
<path d="M670.2 86.3 L673.0 86.3 L671.6 87.84 Z" fill="#222"/>
<rect x="360" y="94.8" width="11.5" height="1.4" rx="0.7" fill="#e9e9e9"/>
<path d="M681 90.39999999999999 h2.6 v2 h-2.6 z M682.4 92.39999999999999 v2.8 h2.2 M683.8 94.0 h2 v2.2 h-2 z" stroke="#333" stroke-width="0.55" fill="none" stroke-linejoin="round" stroke-linecap="round" />
<path d="M689.6 91.89999999999999 L692.4 91.89999999999999 L691 93.44 Z" fill="#222"/>
<path d="M734 95.6 v-2.8 l2 -2.6 l2 1.4 q2.6 -0.6 3.2 1.6 v2.4 z M738 95.6 v-2.2" stroke="#333" stroke-width="0.6" fill="#f6f6f6" stroke-linejoin="round" stroke-linecap="round" />
<path d="M746.8 90.66 h2.64 l0.8800000000000001 0.9900000000000001 h3.9600000000000004 v3.74 h-7.48 z" stroke="#3f83d6" stroke-width="0.8" fill="#e3effc" stroke-linejoin="round" stroke-linecap="round" />
<path d="M759.6 90.39999999999999 l1.4 -0.6 v6 l-1.4 0.6 z M761 89.8 h4.6 l1 1 v5 h-5.6" stroke="#333" stroke-width="0.6" fill="#f6f6f6" stroke-linejoin="round" stroke-linecap="round" />
<path d="M772.6 89.8 h4.4 v4.8 h-4.4 z M774 94.6 v1.4 h4.6 v-5 h-1.6" stroke="#333" stroke-width="0.6" fill="#f6f6f6" stroke-linejoin="round" stroke-linecap="round" />
<rect x="773.6" y="90.6" width="2.6" height="2.4" fill="#4a4a4a"/>
<path d="M678.0 103.7 L679.6 105.4 L681.2 103.7" stroke="#222" stroke-width="0.95" fill="none" stroke-linejoin="round" stroke-linecap="round" />
<path d="M684.0 104.9 q-0.6 -2.8 2 -3 q2 -1.4 3.2 0.6 q2 0.2 1.6 2.4 M686.6 104.7 q0.4 -1.6 2 -1 q2 0.4 1.6 2 q-0.2 1.6 -2 1.4" stroke="#5b8fd8" stroke-width="1.0" fill="none" stroke-linejoin="round" stroke-linecap="round" />
<path d="M688.2 111.81 h2.4 l0.8 0.9 h3.6 v3.4 h-6.8 z" stroke="#5b8fd8" stroke-width="0.65" fill="#f4f8fe" stroke-linejoin="round" stroke-linecap="round" />
<path d="M682.1999999999999 122.12 L683.8 123.82000000000001 L685.4 122.12" stroke="#222" stroke-width="0.95" fill="none" stroke-linejoin="round" stroke-linecap="round" />
<path d="M688.2 121.02 h2.4 l0.8 0.9 h3.6 v3.4 h-6.8 z" stroke="#5b8fd8" stroke-width="0.65" fill="#f4f8fe" stroke-linejoin="round" stroke-linecap="round" />
<path d="M688.2 120.32000000000001 h2.6" stroke="#3b6fc0" stroke-width="0.9" fill="none" stroke-linejoin="round" stroke-linecap="round" />
<path d="M687.8000000000001 123.52 l2.2 1 l-2.2 1.4 z" fill="#1a1a1a"/>
<path d="M692.0 130.23 h2.4 l0.8 0.9 h3.6 v3.4 h-6.8 z" stroke="#5b8fd8" stroke-width="0.65" fill="#f4f8fe" stroke-linejoin="round" stroke-linecap="round" />
<path d="M692.0 139.44 h2.4 l0.8 0.9 h3.6 v3.4 h-6.8 z" stroke="#5b8fd8" stroke-width="0.65" fill="#f4f8fe" stroke-linejoin="round" stroke-linecap="round" />
<path d="M692.0 148.65 h2.4 l0.8 0.9 h3.6 v3.4 h-6.8 z" stroke="#5b8fd8" stroke-width="0.65" fill="#f4f8fe" stroke-linejoin="round" stroke-linecap="round" />
<path d="M682.1999999999999 158.95999999999998 L683.8 160.66 L685.4 158.95999999999998" stroke="#222" stroke-width="0.95" fill="none" stroke-linejoin="round" stroke-linecap="round" />
<path d="M688.2 157.85999999999999 h2.4 l0.8 0.9 h3.6 v3.4 h-6.8 z" stroke="#5b8fd8" stroke-width="0.65" fill="#f4f8fe" stroke-linejoin="round" stroke-linecap="round" />
<path d="M688.2 157.16 h2.6" stroke="#3b6fc0" stroke-width="0.9" fill="none" stroke-linejoin="round" stroke-linecap="round" />
<path d="M687.8000000000001 160.35999999999999 l2.2 1 l-2.2 1.4 z" fill="#1a1a1a"/>
<path d="M692.0 167.07 h2.4 l0.8 0.9 h3.6 v3.4 h-6.8 z" stroke="#5b8fd8" stroke-width="0.65" fill="#f4f8fe" stroke-linejoin="round" stroke-linecap="round" />
<path d="M692.0 176.28 h2.4 l0.8 0.9 h3.6 v3.4 h-6.8 z" stroke="#5b8fd8" stroke-width="0.65" fill="#f4f8fe" stroke-linejoin="round" stroke-linecap="round" />
<path d="M692.0 185.49 h2.4 l0.8 0.9 h3.6 v3.4 h-6.8 z" stroke="#5b8fd8" stroke-width="0.65" fill="#f4f8fe" stroke-linejoin="round" stroke-linecap="round" />
<path d="M682.1999999999999 195.8 L683.8 197.50000000000003 L685.4 195.8" stroke="#222" stroke-width="0.95" fill="none" stroke-linejoin="round" stroke-linecap="round" />
<path d="M688.2 194.70000000000002 h2.4 l0.8 0.9 h3.6 v3.4 h-6.8 z" stroke="#5b8fd8" stroke-width="0.65" fill="#f4f8fe" stroke-linejoin="round" stroke-linecap="round" />
<path d="M688.2 194.00000000000003 h2.6" stroke="#3b6fc0" stroke-width="0.9" fill="none" stroke-linejoin="round" stroke-linecap="round" />
<path d="M687.8000000000001 197.20000000000002 l2.2 1 l-2.2 1.4 z" fill="#1a1a1a"/>
<path d="M692.0 203.91 h2.4 l0.8 0.9 h3.6 v3.4 h-6.8 z" stroke="#5b8fd8" stroke-width="0.65" fill="#f4f8fe" stroke-linejoin="round" stroke-linecap="round" />
<path d="M692.0 213.12 h2.4 l0.8 0.9 h3.6 v3.4 h-6.8 z" stroke="#5b8fd8" stroke-width="0.65" fill="#f4f8fe" stroke-linejoin="round" stroke-linecap="round" />
<path d="M692.0 222.33 h2.4 l0.8 0.9 h3.6 v3.4 h-6.8 z" stroke="#5b8fd8" stroke-width="0.65" fill="#f4f8fe" stroke-linejoin="round" stroke-linecap="round" />
<path d="M683.0 231.84 L684.6999999999999 233.44 L683.0 235.04" stroke="#999" stroke-width="0.6" fill="none" stroke-linejoin="round" stroke-linecap="round" />
<path d="M688.2 231.54 h2.4 l0.8 0.9 h3.6 v3.4 h-6.8 z" stroke="#5b8fd8" stroke-width="0.65" fill="#f4f8fe" stroke-linejoin="round" stroke-linecap="round" />
<path d="M688.2 230.84 h2.6" stroke="#3b6fc0" stroke-width="0.9" fill="none" stroke-linejoin="round" stroke-linecap="round" />
<path d="M687.8000000000001 234.04 l2.2 1 l-2.2 1.4 z" fill="#1a1a1a"/>
<path d="M682.1999999999999 241.85 L683.8 243.55 L685.4 241.85" stroke="#222" stroke-width="0.95" fill="none" stroke-linejoin="round" stroke-linecap="round" />
<path d="M688.2 240.75 h2.4 l0.8 0.9 h3.6 v3.4 h-6.8 z" stroke="#5b8fd8" stroke-width="0.65" fill="#f4f8fe" stroke-linejoin="round" stroke-linecap="round" />
<path d="M688.2 240.05 h2.6" stroke="#3b6fc0" stroke-width="0.9" fill="none" stroke-linejoin="round" stroke-linecap="round" />
<path d="M687.8000000000001 243.25 l2.2 1 l-2.2 1.4 z" fill="#1a1a1a"/>
<path d="M692.2 254.06 v-3 l1.2 -1.6 h3.8 l1.2 1.6 v3 z" stroke="#86a8de" stroke-width="0.65" fill="#f4f8fe" stroke-linejoin="round" stroke-linecap="round" />
<path d="M692.2 263.27000000000004 v-3 l1.2 -1.6 h3.8 l1.2 1.6 v3 z" stroke="#86a8de" stroke-width="0.65" fill="#f4f8fe" stroke-linejoin="round" stroke-linecap="round" />
<path d="M692.2 272.48 v-3 l1.2 -1.6 h3.8 l1.2 1.6 v3 z" stroke="#86a8de" stroke-width="0.65" fill="#f4f8fe" stroke-linejoin="round" stroke-linecap="round" />
<path d="M692.2 281.69 v-3 l1.2 -1.6 h3.8 l1.2 1.6 v3 z" stroke="#86a8de" stroke-width="0.65" fill="#f4f8fe" stroke-linejoin="round" stroke-linecap="round" />
<circle cx="691.8000000000001" cy="288.90000000000003" r="2.7" fill="#eaf1fc" stroke="#3f7fd6" stroke-width="0.8"/>
<path d="M690.2 287.90000000000003 h3 v2 h-3 z" stroke="#2f5faa" stroke-width="0.5" fill="#fff" stroke-linejoin="round" stroke-linecap="round" />
<path d="M688.0 289.30000000000007 l2.4 1 l-2.4 1.5 z" fill="#1a1a1a"/>
<path d="M688.2 286.1 h2.4" stroke="#3b6fc0" stroke-width="0.9" fill="none" stroke-linejoin="round" stroke-linecap="round" />
<circle cx="691.8000000000001" cy="298.11" r="2.7" fill="#eaf1fc" stroke="#3f7fd6" stroke-width="0.8"/>
<path d="M690.2 297.11 h3 v2 h-3 z" stroke="#2f5faa" stroke-width="0.5" fill="#fff" stroke-linejoin="round" stroke-linecap="round" />
<path d="M688.0 298.51000000000005 l2.4 1 l-2.4 1.5 z" fill="#1a1a1a"/>
<path d="M688.2 295.31 h2.4" stroke="#3b6fc0" stroke-width="0.9" fill="none" stroke-linejoin="round" stroke-linecap="round" />
<circle cx="691.8000000000001" cy="307.32" r="2.7" fill="#eaf1fc" stroke="#3f7fd6" stroke-width="0.8"/>
<path d="M690.2 306.32 h3 v2 h-3 z" stroke="#2f5faa" stroke-width="0.5" fill="#fff" stroke-linejoin="round" stroke-linecap="round" />
<path d="M688.0 307.72 l2.4 1 l-2.4 1.5 z" fill="#1a1a1a"/>
<path d="M688.2 304.52 h2.4" stroke="#3b6fc0" stroke-width="0.9" fill="none" stroke-linejoin="round" stroke-linecap="round" />
<circle cx="691.8000000000001" cy="316.53000000000003" r="2.7" fill="#eaf1fc" stroke="#3f7fd6" stroke-width="0.8"/>
<path d="M690.2 315.53000000000003 h3 v2 h-3 z" stroke="#2f5faa" stroke-width="0.5" fill="#fff" stroke-linejoin="round" stroke-linecap="round" />
<path d="M688.0 316.93000000000006 l2.4 1 l-2.4 1.5 z" fill="#1a1a1a"/>
<path d="M688.2 313.73 h2.4" stroke="#3b6fc0" stroke-width="0.9" fill="none" stroke-linejoin="round" stroke-linecap="round" />
<path d="M777.4 103.4 L779 101.8 L780.6 103.4" stroke="#333" stroke-width="0.7" fill="none" stroke-linejoin="round" stroke-linecap="round" />
<path d="M777.4 321.8 L779 323.4 L780.6 321.8" stroke="#333" stroke-width="0.7" fill="none" stroke-linejoin="round" stroke-linecap="round" />
<path d="M688.2 323.84000000000003 h2.4 l0.8 0.9 h3.6 v3.4 h-6.8 z" stroke="#5b8fd8" stroke-width="0.65" fill="#f4f8fe" stroke-linejoin="round" stroke-linecap="round" />
<path d="M722.6 338.54 h2.16 l0.7200000000000001 0.81 h3.24 v3.06 h-6.12 z" stroke="#bcd0ea" stroke-width="0.6" fill="#f2f6fb" stroke-linejoin="round" stroke-linecap="round" />
<path d="M734.2 338.57 h2.28 l0.76 0.855 h3.42 v3.23 h-6.46 z" stroke="#3f7fd0" stroke-width="0.7" fill="#e6f0fc" stroke-linejoin="round" stroke-linecap="round" />
<rect x="737.2" y="338.0" width="2.2" height="2" fill="#333"/>
<path d="M746.6 338.57 h2.28 l0.76 0.855 h3.42 v3.23 h-6.46 z" stroke="#3f7fd0" stroke-width="0.7" fill="#e6f0fc" stroke-linejoin="round" stroke-linecap="round" />
<rect x="749.6" y="338.0" width="2.2" height="2" fill="#333"/>
<path d="M758.8000000000001 338.57 h2.28 l0.76 0.855 h3.42 v3.23 h-6.46 z" stroke="#3f7fd0" stroke-width="0.7" fill="#e6f0fc" stroke-linejoin="round" stroke-linecap="round" />
<rect x="761.8000000000001" y="338.0" width="2.2" height="2" fill="#222"/>
<path d="M773.8 338.3 L777.6 342.09999999999997 M777.6 338.3 L773.8 342.09999999999997" stroke="#f0b088" stroke-width="0.7" fill="none" stroke-linejoin="round" stroke-linecap="round" />
<path d="M679.2 351.5 L681.2 351.5 L680.2 352.6 Z" fill="#333"/>
</svg>
<div class="t" style="left:697.80px;top:322.79px;font-size:4.7px;line-height:5.7px;color:#222;clip-path:inset(0 0 3px 0)">3D</div>
<div class="r" style="left:782.00px;top:26.00px;width:0.50px;height:369.00px;background:#d9d9d9;"></div>
<div class="r" style="left:778.00px;top:26.00px;width:0.50px;height:62.00px;background:#e2e2e2;"></div>
<div class="r" style="left:796.40px;top:74.00px;width:0.50px;height:28.00px;background:#cfcfcf;"></div>
<div class="r" style="left:784.50px;top:71.00px;width:12.00px;height:0.50px;background:#dcdcdc;"></div>
<div class="r" style="left:784.50px;top:172.00px;width:12.00px;height:0.50px;background:#dcdcdc;"></div>
<div class="r" style="left:784.50px;top:189.40px;width:12.00px;height:0.50px;background:#dcdcdc;"></div>
<div class="r" style="left:784.50px;top:233.30px;width:12.00px;height:0.50px;background:#dcdcdc;"></div>
<div class="r" style="left:784.50px;top:263.50px;width:12.00px;height:0.50px;background:#dcdcdc;"></div>
<div class="r" style="left:784.50px;top:306.70px;width:12.00px;height:0.50px;background:#dcdcdc;"></div>
<div class="r" style="left:789.60px;top:28.80px;width:6.40px;height:0.60px;background:#cfcfcf;"></div>
<div class="r" style="left:675.00px;top:326.20px;width:107.00px;height:7.00px;background:#f0f0f0;"></div>
<div class="r" style="left:682.20px;top:327.00px;width:80.00px;height:5.80px;background:#cdcdcd;"></div>
<div class="r" style="left:147.60px;top:395.60px;width:0.50px;height:7.00px;background:#d4d4d4;"></div>
<div class="r" style="left:205.60px;top:395.60px;width:0.50px;height:7.00px;background:#d4d4d4;"></div>
<div class="r" style="left:264.00px;top:395.60px;width:0.50px;height:7.00px;background:#d4d4d4;"></div>
<div class="r" style="left:323.00px;top:395.60px;width:0.50px;height:7.00px;background:#d4d4d4;"></div>
<div class="r" style="left:381.60px;top:395.60px;width:0.50px;height:7.00px;background:#d4d4d4;"></div>
<div class="r" style="left:442.00px;top:395.60px;width:0.50px;height:7.00px;background:#d4d4d4;"></div>
<div class="r" style="left:499.40px;top:395.60px;width:0.50px;height:7.00px;background:#d4d4d4;"></div>
<div class="r" style="left:558.00px;top:395.60px;width:0.50px;height:7.00px;background:#d4d4d4;"></div>
<div class="r" style="left:616.00px;top:395.60px;width:0.50px;height:7.00px;background:#d4d4d4;"></div>
<div class="r" style="left:379.80px;top:405.50px;width:0.50px;height:11.00px;background:#d4d4d4;"></div>
<div class="r" style="left:407.40px;top:405.50px;width:0.50px;height:11.00px;background:#d4d4d4;"></div>
<div class="r" style="left:447.60px;top:405.50px;width:0.50px;height:11.00px;background:#d4d4d4;"></div>
<div class="r" style="left:473.30px;top:405.50px;width:0.50px;height:11.00px;background:#d4d4d4;"></div>
<div class="r" style="left:488.00px;top:405.50px;width:0.50px;height:11.00px;background:#d4d4d4;"></div>
<div class="r" style="left:0.00px;top:418.60px;width:770.00px;height:0.60px;background:#f5f5f5;"></div>
<svg width="800" height="426" viewBox="0 0 800 426">
<path d="M785.8 36.0 L787.8 34.800000000000004 L791.1999999999999 35.4 L791.1999999999999 39.4 L789.0 40.6 L785.8 39.800000000000004 Z M785.8 36.0 L789.0 36.6 L791.1999999999999 35.4 M789.0 36.6 V40.6" stroke="#333" stroke-width="0.6" fill="#f8f8f8" stroke-linejoin="round" stroke-linecap="round" />
<path d="M785.8 48.8 L787.8 47.6 L791.1999999999999 48.199999999999996 L791.1999999999999 52.199999999999996 L789.0 53.4 L785.8 52.6 Z M785.8 48.8 L789.0 49.4 L791.1999999999999 48.199999999999996 M789.0 49.4 V53.4" stroke="#333" stroke-width="0.6" fill="#f8f8f8" stroke-linejoin="round" stroke-linecap="round" />
<path d="M788.4 59.6 V64 L785.4 66.6 M788.4 64 L791.4 66.6" stroke="#333" stroke-width="0.7" fill="none" stroke-linejoin="round" stroke-linecap="round" />
<circle cx="788.4" cy="59.8" r="0.9" fill="#333"/>
<path d="M797.7 63.15 L799.5 63.15 L798.6 64.14 Z" fill="#333"/>
<path d="M788.4 76.6 V81 L786.8 85.4 M788.4 81 L790.0 85.4 M786.6 79.4 H790.1999999999999" stroke="#d4d4d4" stroke-width="0.7" fill="none" stroke-linejoin="round" stroke-linecap="round" />
<path d="M785.4 93.4 L788.4 90.6 L791.4 93.4 L788.4 96 Z" stroke="#d8d8d8" stroke-width="0.7" fill="none" stroke-linejoin="round" stroke-linecap="round" />
<path d="M785.8 108.6 H791.0 V113.4 H785.8 Z M785.8 111 H791.0" stroke="#dadada" stroke-width="0.7" fill="none" stroke-linejoin="round" stroke-linecap="round" />
<path d="M785.8 121.6 H791.0 V126.4 H785.8 Z M785.8 124 H791.0" stroke="#dadada" stroke-width="0.7" fill="none" stroke-linejoin="round" stroke-linecap="round" />
<path d="M785.8 134.6 H791.0 V139.4 H785.8 Z M785.8 137 H791.0" stroke="#dadada" stroke-width="0.7" fill="none" stroke-linejoin="round" stroke-linecap="round" />
<path d="M785.8 148.1 H791.0 V152.9 H785.8 Z M785.8 150.5 H791.0" stroke="#dadada" stroke-width="0.7" fill="none" stroke-linejoin="round" stroke-linecap="round" />
<path d="M785.8 161.6 H791.0 V166.4 H785.8 Z M785.8 164 H791.0" stroke="#dadada" stroke-width="0.7" fill="none" stroke-linejoin="round" stroke-linecap="round" />
<path d="M785.93 180.28 L787.8299999999999 179.14000000000001 L791.06 179.71 L791.06 183.51000000000002 L788.97 184.65 L785.93 183.89000000000001 Z M785.93 180.28 L788.97 180.85000000000002 L791.06 179.71 M788.97 180.85000000000002 V184.65" stroke="#4f8edc" stroke-width="0.7" fill="#e8f0fb" stroke-linejoin="round" stroke-linecap="round" />
<path d="M798.2 181.6 L799.8 181.6 L799 182.48 Z" fill="#333"/>
<rect x="785.5999999999999" y="195.60000000000002" width="1.2" height="1.2" fill="#444"/>
<rect x="785.5999999999999" y="197.8" width="1.2" height="1.2" fill="#444"/>
<rect x="785.5999999999999" y="200.0" width="1.2" height="1.2" fill="#444"/>
<rect x="787.8" y="195.60000000000002" width="1.2" height="1.2" fill="#444"/>
<rect x="787.8" y="197.8" width="1.2" height="1.2" fill="#444"/>
<rect x="787.8" y="200.0" width="1.2" height="1.2" fill="#444"/>
<rect x="790.0" y="195.60000000000002" width="1.2" height="1.2" fill="#444"/>
<rect x="790.0" y="197.8" width="1.2" height="1.2" fill="#444"/>
<rect x="790.0" y="200.0" width="1.2" height="1.2" fill="#444"/>
<path d="M798.2 198.0 L799.8 198.0 L799 198.88 Z" fill="#333"/>
<path d="M786.06 209.56 L787.86 208.48 L790.92 209.02 L790.92 212.62 L788.9399999999999 213.7 L786.06 212.98 Z M786.06 209.56 L788.9399999999999 210.1 L790.92 209.02 M788.9399999999999 210.1 V213.7" stroke="#3d5f94" stroke-width="0.65" fill="#eef3fb" stroke-linejoin="round" stroke-linecap="round" />
<path d="M785.93 223.28 L787.8299999999999 222.14000000000001 L791.06 222.71 L791.06 226.51000000000002 L788.97 227.65 L785.93 226.89000000000001 Z M785.93 223.28 L788.97 223.85000000000002 L791.06 222.71 M788.97 223.85000000000002 V227.65" stroke="#4f8edc" stroke-width="0.7" fill="#e8f0fb" stroke-linejoin="round" stroke-linecap="round" />
<path d="M798.2 224.6 L799.8 224.6 L799 225.48 Z" fill="#333"/>
<path d="M785.8 244.6 H791.0 L789.4 241.6 V239 H787.4 V241.6 Z" stroke="#333" stroke-width="0.7" fill="none" stroke-linejoin="round" stroke-linecap="round" />
<path d="M785.4 256.4 H791.4 M786.4 252 V255 M789.4 252 L790.8 255" stroke="#d0d0d0" stroke-width="0.7" fill="none" stroke-linejoin="round" stroke-linecap="round" />
<path d="M785.1999999999999 269.4 H787.0 L787.6 268.4 H789.1999999999999 L789.8 269.4 H791.6 V274 H785.1999999999999 Z" stroke="#333" stroke-width="0.65" fill="#f6f6f6" stroke-linejoin="round" stroke-linecap="round" />
<circle cx="788.4" cy="271.6" r="1.4" fill="none" stroke="#333" stroke-width="0.6"/>
<path d="M798.2 271.0 L799.8 271.0 L799 271.88 Z" fill="#333"/>
<path d="M786.06 283.36 L787.86 282.28000000000003 L790.92 282.82 L790.92 286.42 L788.9399999999999 287.5 L786.06 286.78000000000003 Z M786.06 283.36 L788.9399999999999 283.90000000000003 L790.92 282.82 M788.9399999999999 283.90000000000003 V287.5" stroke="#4f8edc" stroke-width="0.7" fill="#dfeafa" stroke-linejoin="round" stroke-linecap="round" />
<path d="M785.6 301.6 V298.6 L788.4 296 L791.1999999999999 298.6 V301.6 Z" stroke="#4f8edc" stroke-width="0.7" fill="#e8f0fb" stroke-linejoin="round" stroke-linecap="round" />
<path d="M785.4 314.2 H789.4 V318 H785.4 Z M789.4 315.6 L791.4 314.4 V317.8 L789.4 316.8" stroke="#333" stroke-width="0.65" fill="none" stroke-linejoin="round" stroke-linecap="round" />
<circle cx="787.4" cy="326.8" r="1.7" fill="none" stroke="#333" stroke-width="0.65"/><circle cx="789.6" cy="329.2" r="1.9" fill="#f4f4f4" stroke="#333" stroke-width="0.65"/>
<path d="M678.4 328.2 L676.9 329.8 L678.4 331.4" stroke="#333" stroke-width="0.7" fill="none" stroke-linejoin="round" stroke-linecap="round" />
<path d="M770.6 328.2 L772.1 329.8 L770.6 331.4" stroke="#333" stroke-width="0.7" fill="none" stroke-linejoin="round" stroke-linecap="round" />
<path d="M682 323.6 L683.5 325.2 L685 323.6" stroke="#333" stroke-width="0.7" fill="none" stroke-linejoin="round" stroke-linecap="round" />
<path d="M787.6 6.8 H790.4" stroke="#333" stroke-width="0.7" fill="none" stroke-linejoin="round" stroke-linecap="round" />
<path d="M793.6 4.4 h2.4 v2.2 h-2.4 z" stroke="#333" stroke-width="0.6" fill="#444" stroke-linejoin="round" stroke-linecap="round" />
<path d="M798.8 4.2 l2 2.2" stroke="#333" stroke-width="0.6" fill="none" stroke-linejoin="round" stroke-linecap="round" />
<path d="M61 398.1 Q61.6 396.1 64 396.5 Q66 397.1 65.2 399.5 Q64.4 401.1 62.6 400.70000000000005 M62 400.1 L61 402.1" stroke="#333" stroke-width="0.6" fill="none" stroke-linejoin="round" stroke-linecap="round" />
<path d="M71.4 398.1 Q70.8 396.1 68.4 396.5 Q66.6 397.1 67.2 399.5" stroke="#d0d0d0" stroke-width="0.6" fill="none" stroke-linejoin="round" stroke-linecap="round" />
<circle cx="80.6" cy="398.70000000000005" r="2.3" fill="#fafafa" stroke="#333" stroke-width="0.6"/>
<path d="M82.3 400.5 L83.8 402.1" stroke="#333" stroke-width="0.8" fill="none" stroke-linejoin="round" stroke-linecap="round" />
<path d="M79.5 398.70000000000005 H81.69999999999999 M80.6 397.6 V399.8" stroke="#333" stroke-width="0.5" fill="none" stroke-linejoin="round" stroke-linecap="round" />
<circle cx="92.6" cy="398.70000000000005" r="2.3" fill="#fafafa" stroke="#333" stroke-width="0.6"/>
<path d="M94.3 400.5 L95.8 402.1" stroke="#333" stroke-width="0.8" fill="none" stroke-linejoin="round" stroke-linecap="round" />
<path d="M91.5 398.70000000000005 H93.69999999999999" stroke="#333" stroke-width="0.5" fill="none" stroke-linejoin="round" stroke-linecap="round" />
<path d="M142.52499999999998 397.75 L144.01 399.1 L142.52499999999998 400.45000000000005 Z" fill="#222"/>
<path d="M259.72499999999997 397.75 L261.21 399.1 L259.72499999999997 400.45000000000005 Z" fill="#222"/>
<path d="M318.325 397.75 L319.81 399.1 L318.325 400.45000000000005 Z" fill="#222"/>
<path d="M376.925 397.75 L378.41 399.1 L376.925 400.45000000000005 Z" fill="#222"/>
<path d="M436.125 397.75 L437.61 399.1 L436.125 400.45000000000005 Z" fill="#222"/>
<path d="M494.325 397.75 L495.81 399.1 L494.325 400.45000000000005 Z" fill="#222"/>
<path d="M552.9250000000001 397.75 L554.41 399.1 L552.9250000000001 400.45000000000005 Z" fill="#222"/>
<path d="M611.9250000000001 397.75 L613.41 399.1 L611.9250000000001 400.45000000000005 Z" fill="#222"/>
<path d="M670.325 397.75 L671.81 399.1 L670.325 400.45000000000005 Z" fill="#222"/>
<path d="M201.45 398.0 L202.66 399.1 L201.45 400.20000000000005 Z" fill="#c4c4c4"/>
<path d="M151 397.1 V401.1 M151 397.1 H153.4 M151 399.1 H153 M154.6 398.1 L156 400.70000000000005 L157.4 398.1" stroke="#d4d4d4" stroke-width="0.6" fill="none" stroke-linejoin="round" stroke-linecap="round" />
<path d="M208.6 397.5 H214.8 V400.70000000000005 H208.6 Z M210.2 397.5 V398.90000000000003 M211.8 397.5 V398.90000000000003 M213.4 397.5 V398.90000000000003" stroke="#333" stroke-width="0.55" fill="#fafafa" stroke-linejoin="round" stroke-linecap="round" />
<path d="M267.86 397.46000000000004 L269.65999999999997 396.38000000000005 L272.71999999999997 396.92 L272.71999999999997 400.52000000000004 L270.74 401.6 L267.86 400.88000000000005 Z M267.86 397.46000000000004 L270.74 398.00000000000006 L272.71999999999997 396.92 M270.74 398.00000000000006 V401.6" stroke="#333" stroke-width="0.55" fill="#999" stroke-linejoin="round" stroke-linecap="round" />
<path d="M326 396.90000000000003 H332.2 V401.3 H326 Z" stroke="#444" stroke-width="0.6" fill="#6e6e6e" stroke-linejoin="round" stroke-linecap="round" />
<path d="M326.6 398.5 H331.6 M326.6 399.90000000000003 H331.6" stroke="#eee" stroke-width="0.4" fill="none" stroke-linejoin="round" stroke-linecap="round" />
<path d="M386.2 396.5 V399.90000000000003 Q387.6 402.5 389 399.90000000000003 V396.5" stroke="#333" stroke-width="0.6" fill="none" stroke-linejoin="round" stroke-linecap="round" />
<path d="M444.2 396.90000000000003 H450 V401.3 H444.2 Z M446.1 396.90000000000003 V401.3 M448.1 396.90000000000003 V401.3 M444.2 399.1 H450" stroke="#999" stroke-width="0.5" fill="#ddd" stroke-linejoin="round" stroke-linecap="round" />
<path d="M502.4 396.90000000000003 H506 V400.5 H502.4 Z" stroke="#555" stroke-width="0.55" fill="#bbb" stroke-linejoin="round" stroke-linecap="round" />
<path d="M505 398.70000000000005 H508 V401.90000000000003 H505 Z" stroke="#333" stroke-width="0.55" fill="#666" stroke-linejoin="round" stroke-linecap="round" />
<path d="M561.6 401.70000000000005 H566.4 L565.4 399.1 H564.6 V396.70000000000005 H563.4 V399.1 H562.6 Z" stroke="#333" stroke-width="0.6" fill="#fafafa" stroke-linejoin="round" stroke-linecap="round" />
<path d="M619.4 398.1 H624.6 V401.70000000000005 H619.4 Z M619.4 398.1 V396.5 M624.6 398.1 V396.5 M619.4 397.1 H624.6" stroke="#555" stroke-width="0.55" fill="none" stroke-linejoin="round" stroke-linecap="round" />
<path d="M5.6 406.09999999999997 V413.5 H13.6 Z" stroke="#5d6b7c" stroke-width="0.6" fill="#a9b4c2" stroke-linejoin="round" stroke-linecap="round" />
<path d="M7 413.5 A2.6 2.6 0 0 0 5.6 411.09999999999997" stroke="#4f8edc" stroke-width="0.6" fill="none" stroke-linejoin="round" stroke-linecap="round" />
<path d="M17.9 408.9 L19.0 409.9 L17.9 410.9 Z" fill="#222"/>
<path d="M31.6 409.5 L33.6 412.09999999999997 L37.2 407.29999999999995" stroke="#222" stroke-width="0.8" fill="none" stroke-linejoin="round" stroke-linecap="round" />
<path d="M41.5 408.9 L42.6 409.9 L41.5 410.9 Z" fill="#222"/>
<path d="M52 412.29999999999995 V407.9 M50.8 409.09999999999997 L52 407.5 L53.2 409.09999999999997" stroke="#cfcfcf" stroke-width="0.7" fill="none" stroke-linejoin="round" stroke-linecap="round" />
<path d="M58.4 408.5 Q58.6 407.09999999999997 59.8 407.29999999999995 Q61 407.7 59.8 409.5 V410.7 M59.8 411.9 V412.5" stroke="#cfcfcf" stroke-width="0.7" fill="none" stroke-linejoin="round" stroke-linecap="round" />
<path d="M67.4 408.29999999999995 H72 V412.9 H67.4 Z M68.8 408.29999999999995 V406.9 H73.4 V411.29999999999995 H72 M68.6 410.5 H70.8" stroke="#333" stroke-width="0.6" fill="none" stroke-linejoin="round" stroke-linecap="round" />
<path d="M77.5 408.9 L78.6 409.9 L77.5 410.9 Z" fill="#222"/>
<rect x="82.2" y="404.9" width="0.4" height="10" fill="#c4c4c4"/>
<path d="M85.6 407.29999999999995 L90.6 412.7" stroke="#333" stroke-width="0.9" fill="none" stroke-linejoin="round" stroke-linecap="round" />
<path d="M85 408.7 L86.8 406.7" stroke="#777" stroke-width="0.6" fill="none" stroke-linejoin="round" stroke-linecap="round" />
<path d="M101.4 412.09999999999997 H109 M102.6 410.5 L107.6 407.5" stroke="#6c7d92" stroke-width="0.6" fill="none" stroke-linejoin="round" stroke-linecap="round" />
<path d="M104 411.09999999999997 L106.4 409.7" stroke="#4f8edc" stroke-width="0.7" fill="none" stroke-linejoin="round" stroke-linecap="round" />
<path d="M113.9 408.9 L115.0 409.9 L113.9 410.9 Z" fill="#222"/>
<path d="M152.85000000000002 407.3 L153.84 408.2 L152.85000000000002 409.09999999999997 Z" fill="#222"/>
<rect x="234.2" y="407.29999999999995" width="5.4" height="2.2" fill="#3d5f94"/>
<rect x="236.4" y="410.29999999999995" width="4" height="2.4" fill="#4f8edc"/>
<path d="M234 410.5 H236 V412.7" stroke="#333" stroke-width="0.6" fill="none" stroke-linejoin="round" stroke-linecap="round" />
<rect x="246" y="408.09999999999997" width="6.4" height="1.3" fill="#444"/>
<rect x="246" y="410.5" width="6.4" height="1.3" fill="#444"/>
<path d="M257.6 412.29999999999995 L260 407.5 H264.6 V412.29999999999995 Z" stroke="#333" stroke-width="0.6" fill="#888" stroke-linejoin="round" stroke-linecap="round" />
<path d="M270.13 408.38 L272.03000000000003 407.23999999999995 L275.26000000000005 407.81 L275.26000000000005 411.60999999999996 L273.17 412.75 L270.13 411.98999999999995 Z M270.13 408.38 L273.17 408.95 L275.26000000000005 407.81 M273.17 408.95 V412.75" stroke="#333" stroke-width="0.55" fill="#8a8a8a" stroke-linejoin="round" stroke-linecap="round" />
<rect x="281.4" y="407.09999999999997" width="6.2" height="1.5" fill="#3d5f94"/>
<rect x="281.4" y="409.29999999999995" width="6.2" height="1.5" fill="#4f7fc0"/>
<rect x="281.4" y="411.5" width="6.2" height="1.5" fill="#3d5f94"/>
<path d="M295.4 406.9 V410.5 Q296.8 413.29999999999995 298.2 410.5 V406.9" stroke="#333" stroke-width="0.6" fill="none" stroke-linejoin="round" stroke-linecap="round" />
<path d="M306.6 412.7 H311.6 L310.6 410.29999999999995 H309.8 V407.29999999999995 H308.4 V410.29999999999995 H307.6 Z" stroke="#333" stroke-width="0.6" fill="#fafafa" stroke-linejoin="round" stroke-linecap="round" />
<path d="M317.6 407.9 H320.6 V412.29999999999995 H317.6 Z M320.6 407.9 H324.4 V412.29999999999995 H320.6" stroke="#444" stroke-width="0.6" fill="#eee" stroke-linejoin="round" stroke-linecap="round" />
<path d="M331 407.9 H335 V411.9 H331 Z" stroke="#dcdcdc" stroke-width="0.6" fill="none" stroke-linejoin="round" stroke-linecap="round" />
<path d="M342.2 407.29999999999995 H346.8 M342.2 412.5 H346.8 M343.2 407.29999999999995 Q345 409.9 343.2 412.5 M345.8 407.29999999999995 Q344 409.9 345.8 412.5" stroke="#333" stroke-width="0.6" fill="none" stroke-linejoin="round" stroke-linecap="round" />
<rect x="354" y="407.09999999999997" width="6.2" height="4.4" fill="#2f4d7c"/>
<path d="M355 408.29999999999995 H359.2 M355 409.7 H359.2" stroke="#dfe8f5" stroke-width="0.4" fill="none" stroke-linejoin="round" stroke-linecap="round" />
<path d="M355.4 411.5 L355.4 412.9 L357 411.5" stroke="#2f4d7c" stroke-width="0.5" fill="#2f4d7c" stroke-linejoin="round" stroke-linecap="round" />
<path d="M366.6 407.29999999999995 L368.6 410.5 L370.8 407.29999999999995 M368.6 410.5 V412.7 H372 M369.6 411.29999999999995 H372" stroke="#333" stroke-width="0.6" fill="none" stroke-linejoin="round" stroke-linecap="round" />
<path d="M385 408.9 Q388 406.5 391 408.9 Q391.6 411.29999999999995 388.6 412.5 Q385.6 412.5 385 408.9 Z M386.4 409.9 Q388.4 411.5 390.4 409.9" stroke="#222" stroke-width="0.65" fill="none" stroke-linejoin="round" stroke-linecap="round" />
<path d="M397.6 412.7 V409.7 L399.2 408.7 V412.7 Z M400.6 412.7 V408.9 L402.4 407.09999999999997 L404 408.9 V412.7 Z" stroke="#333" stroke-width="0.55" fill="none" stroke-linejoin="round" stroke-linecap="round" />
<path d="M413 413.29999999999995 Q415 411.5 417 413.29999999999995 Q415 414.9 413 413.29999999999995" stroke="#d6d6d6" stroke-width="0.6" fill="none" stroke-linejoin="round" stroke-linecap="round" />
<path d="M426 413.29999999999995 Q428 411.5 430 413.29999999999995 Q428 414.9 426 413.29999999999995" stroke="#d6d6d6" stroke-width="0.6" fill="none" stroke-linejoin="round" stroke-linecap="round" />
<path d="M437.4 413.29999999999995 Q439.4 411.5 441.4 413.29999999999995 Q439.4 414.9 437.4 413.29999999999995" stroke="#d6d6d6" stroke-width="0.6" fill="none" stroke-linejoin="round" stroke-linecap="round" />
<path d="M452.4 413.29999999999995 Q455 410.9 457.6 413.29999999999995 Q455 415.5 452.4 413.29999999999995 Z" stroke="#222" stroke-width="0.6" fill="#333" stroke-linejoin="round" stroke-linecap="round" />
<ellipse cx="455" cy="413.0" rx="1.5" ry="0.7" fill="#f4f4f4"/>
<path d="M493 406.29999999999995 L494.6 404.9 L496.2 406.29999999999995 M493 412.9 L494.6 414.29999999999995 L496.2 412.9" stroke="#dcdcdc" stroke-width="0.6" fill="none" stroke-linejoin="round" stroke-linecap="round" />
<path d="M732.2 420.6 h3.6 v3.4 h-3.6 z M733.4 421.8 h3.6 v3.2 h-3.6 z" stroke="#555" stroke-width="0.5" fill="#ddd" stroke-linejoin="round" stroke-linecap="round" />
</svg>
</body></html>
